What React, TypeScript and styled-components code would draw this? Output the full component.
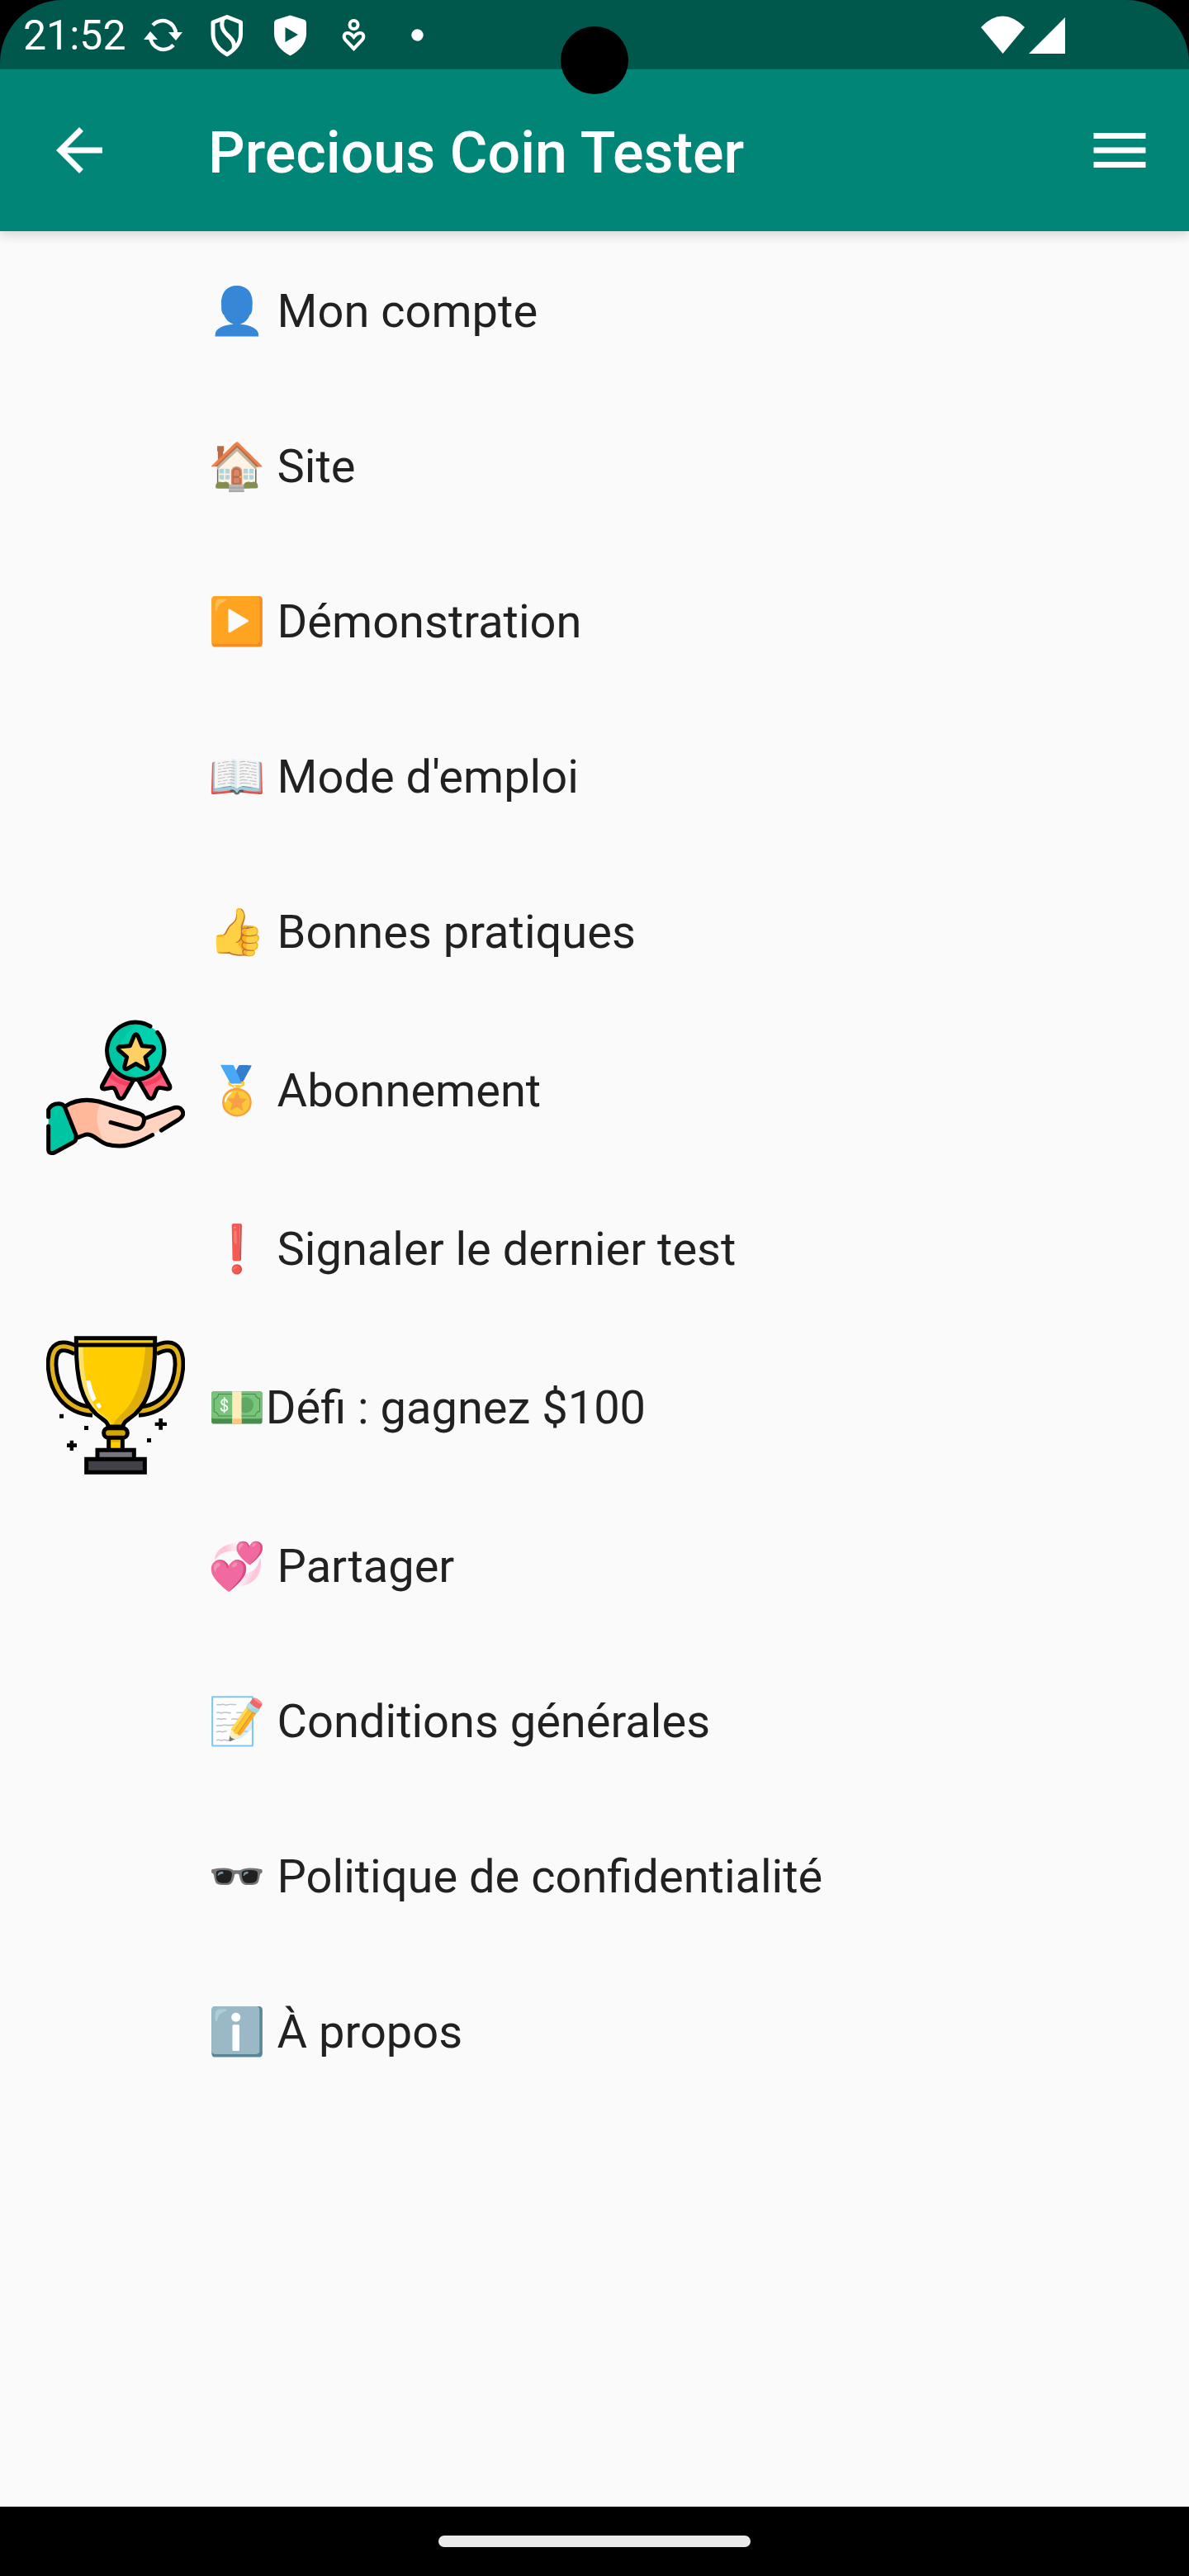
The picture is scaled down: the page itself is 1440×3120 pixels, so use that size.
import React from "react";
import styled, { createGlobalStyle } from "styled-components";

const GlobalStyle = createGlobalStyle`
  *, *::before, *::after { box-sizing: border-box; }
  body { margin: 0; background: #000; }
`;

const Screen = styled.div`
  display: flex;
  flex-direction: column;
  min-height: 100vh;
  background: #fafafa;
  color: rgba(0, 0, 0, 0.87);
  font-family: Roboto, "Noto Color Emoji", sans-serif;
`;

const StatusFrame = styled.div`
  position: relative;
  background: #000;
`;

const StatusBar = styled.div`
  display: flex;
  align-items: center;
  justify-content: space-between;
  height: 84px;
  padding: 0 146px 0 28px;
  border-radius: 76px 76px 0 0;
  background: #00574b;
  color: #fff;
`;

const StatusGroup = styled.div<{ $gap: number }>`
  display: flex;
  align-items: center;
  gap: ${(p) => p.$gap}px;
`;

const Clock = styled.time`
  font-size: 50px;
  line-height: 84px;
  padding-top: 2px;
`;

const StatusIcon = styled.svg`
  display: block;
  width: 53px;
  height: 53px;
`;

const Camera = styled.div`
  position: absolute;
  top: 32px;
  left: 50%;
  width: 82px;
  height: 82px;
  margin-left: -41px;
  border-radius: 50%;
  background: #000;
  z-index: 2;
`;

const AppBar = styled.header`
  display: flex;
  align-items: center;
  height: 196px;
  padding: 0 42px 0 54px;
  background: #008577;
  color: #fff;
  box-shadow: 0 4px 14px rgba(0, 0, 0, 0.16);
`;

const Title = styled.h1`
  flex: 1;
  margin: 0;
  padding: 6px 0 0 114px;
  font-size: 70px;
  line-height: 82px;
  font-weight: 500;
`;

const IconButton = styled.button`
  display: block;
  width: 84px;
  height: 84px;
  padding: 0;
  border: 0;
  background: none;
  color: inherit;
  cursor: pointer;

  svg { display: block; width: 84px; height: 84px; }
`;

const Menu = styled.ul`
  flex: 1;
  margin: 0;
  padding: 0;
  list-style: none;
`;

const MenuLink = styled.a<{ $tall?: boolean }>`
  display: flex;
  align-items: center;
  gap: 28px;
  height: ${(p) => (p.$tall ? 196 : 188)}px;
  padding: 0 56px;
  color: inherit;
  text-decoration: none;
`;

const Slot = styled.span`
  flex: none;
  width: 168px;

  svg { display: block; width: 168px; height: 168px; }
`;

const Label = styled.span`
  padding-top: 6px;
  font-size: 56px;
  line-height: 66px;
  white-space: pre-wrap;
`;

const NavBar = styled.footer`
  display: flex;
  align-items: center;
  justify-content: center;
  height: 84px;
  background: #000;
`;

const Handle = styled.div`
  width: 378px;
  height: 14px;
  border-radius: 7px;
  background: #eaeaea;
`;

const HandMedal = () => (
  <svg viewBox="48 42 504 504" aria-hidden="true" strokeLinejoin="round" strokeLinecap="round">
    <path d="M285 222 251 285q-4 12 8 12l27-5q10 0 14 10l10 24q8 12 19 1l36-62z" fill="#ff5d7d" />
    <path d="M464 222 497 285q4 12-8 12l-27-5q-10 0-14 10l-10 24q-8 12-19 1l-36-62z" fill="#ff5d7d" />
    <path d="M283 236q28 34 78 35l-9 16q-44-2-77-34zM466 236q-28 34-78 35l9 16q44-2 77-34z" fill="#f5405f" />
    <g fill="none" stroke="#000" strokeWidth="15">
      <path d="M285 222 251 285q-4 12 8 12l27-5q10 0 14 10l10 24q8 12 19 1l36-62" />
      <path d="M464 222 497 285q4 12-8 12l-27-5q-10 0-14 10l-10 24q-8 12-19 1l-36-62" />
    </g>
    <circle cx="375" cy="160" r="104" fill="#00d0ae" />
    <path d="M375 56a104 104 0 0 0 0 208q12 0 22-3a104 104 0 0 1 0-202q-10-3-22-3" fill="#00bf9c" opacity=".65" />
    <path d="M426 69A104 104 0 1 0 452 91" fill="none" stroke="#000" strokeWidth="15" />
    <path d="M367 104q7-11 14 0l15 36 37 3q11 4 3 13l-28 25 9 35q0 12-12 7l-31-18-31 18q-11 4-11-7l9-35-29-25q-7-9 3-13l37-3z" fill="#ffd164" stroke="#000" strokeWidth="15" />
    <path d="M120 358c35-22 72-26 118-16l150 45q18 7 16 19l108-42q25-5 32 15 4 16-15 28l-100 58c-60 35-106 48-162 32-44-14-56-44-88-36l-20 10z" fill="#ffd3bf" />
    <path d="M120 358c35-22 72-26 118-16l10 3c-24 42-20 90 10 142-26-15-48-31-69-26l-30 10z" fill="#ffb899" />
    <path d="M56 372q10-22 38-22 16 0 22 14l40 100q4 20-12 28l-66 38q-22 5-22-14z" fill="#00c5a2" />
    <g fill="none" stroke="#000" strokeWidth="15">
      <path d="M56 398V372q10-22 38-22 16 0 22 14l40 100q4 20-12 28l-66 36q-22 7-22-12V432" />
      <path d="M120 358c35-22 72-26 118-16l150 45c16 6 18 18 14 32-5 18-20 26-38 22l-82-23" />
      <path d="M404 405 506 367c20-8 34-2 39 15 2 12-7 20-16 26l-63 39M434 464c-60 33-104 50-166 34-34-12-54-46-84-33l-20 8" />
    </g>
  </svg>
);

const Trophy = () => (
  <svg viewBox="48 54 504 504" aria-hidden="true">
    <g fill="none">
      <path d="M157 106C100 78 68 92 69 160c4 92 56 162 148 168M443 106c57-28 89-14 88 54-4 92-56 162-148 168" stroke="#000" strokeWidth="44" />
      <path d="M157 106C100 78 68 92 69 160c4 92 56 162 148 168M443 106c57-28 89-14 88 54-4 92-56 162-148 168" stroke="#e2b117" strokeWidth="15" />
    </g>
    <path d="M157 62h286v26c0 124-20 200-72 250-32 26-44 30-44 46h-54c0-16-12-20-44-46-52-50-72-126-72-250z" fill="#ffcd00" />
    <path d="M164 94h18c2 120 22 200 60 240 28 22 40 32 44 50h-13c0-16-12-20-44-46-45-46-65-126-65-244" fill="#fbe06a" />
    <path d="M436 94h-28c-6 110-34 192-78 236-24 22-38 36-40 54h37c0-16 12-20 44-46 48-46 65-126 65-244" fill="#e0ae0c" />
    <path d="M193 216h15q6 34 22 66l-13 11q-18-30-24-77M227 303l14-6 8 14-10 8z" fill="#fff" />
    <path d="M157 88V62h286v26c0 124-20 200-72 250-32 26-44 30-44 46h-54c0-16-12-20-44-46-52-50-72-126-72-250zM157 87h286" fill="none" stroke="#000" strokeWidth="15" />
    <path d="M275 422h50v48h-50z" fill="#ffcd00" stroke="#000" strokeWidth="15" />
    <path d="M282 430h36v10h-36z" fill="#dfac0b" />
    <rect x="257" y="389" width="86" height="35" rx="17" fill="#d5a600" stroke="#000" strokeWidth="15" />
    <path d="M234 469h133v34H234z" fill="#77767e" stroke="#000" strokeWidth="15" />
    <path d="M194 502h212v48H194z" fill="#424147" stroke="#000" strokeWidth="15" />
    <path d="M96 338h15v15H96zM186 381h15v15h-15zM414 426h15v15h-15zM457 354h14v14h15v13h-15v14h-14v-14h-14v-13h14zM134 434h13v11h12v14h-12v12h-13v-12h-11v-14h11z" fill="#000" />
  </svg>
);

type Item = { text: string; icon?: React.ReactNode };

const items: Item[] = [
  { text: "👤 Mon compte" },
  { text: "🏠 Site" },
  { text: "▶️ Démonstration" },
  { text: "📖 Mode d'emploi" },
  { text: "👍 Bonnes pratiques" },
  { text: "🏅 Abonnement", icon: <HandMedal /> },
  { text: "❗ Signaler le dernier test" },
  { text: "💵Défi : gagnez $100", icon: <Trophy /> },
  { text: "💞 Partager" },
  { text: "📝 Conditions générales" },
  { text: "🕶️ Politique de confidentialité" },
  { text: "ℹ️ À propos" },
];

export default function App() {
  return (
    <Screen>
      <GlobalStyle />
      <StatusFrame>
        <StatusBar>
          <StatusGroup $gap={18}>
            <Clock>21:52</Clock>
            <StatusGroup $gap={24}>
              <StatusIcon viewBox="0 0 53 53" aria-hidden="true">
                <path d="M14 14.500A16 16 0 0 1 42 25M39 38.500A16 16 0 0 1 11 28" fill="none" stroke="#fff" strokeWidth="4.500" />
                <path d="M33 23h17l-8 10zM3 32h17l-9-10z" fill="#fff" />
              </StatusIcon>
              <StatusIcon viewBox="0 0 53 53" aria-hidden="true">
                <path d="M27 4.500 43.500 11v14c0 12-7 19-16.500 25C17.500 44 10 37 10 25V11z" fill="none" stroke="#fff" strokeWidth="5" strokeLinejoin="round" />
                <path d="M22 7c-3 9 0 14 5 19 7 6 10 11 8 18" fill="none" stroke="#fff" strokeWidth="5" />
              </StatusIcon>
              <StatusIcon viewBox="0 0 53 53" aria-hidden="true">
                <path fillRule="evenodd" d="M26.500 2.500 44 8q2 1 2 4v13c0 12-9 21-19.500 26.500C16 46 7 37 7 25V12q0-3 2-4zM20.500 17v18L36 26z" fill="#fff" />
              </StatusIcon>
              <StatusIcon viewBox="0 0 53 53" aria-hidden="true" fill="none" stroke="#fff" strokeWidth="4">
                <circle cx="26.500" cy="14" r="5" />
                <path d="M26.500 43 16.500 32.500C13 28 15 24 19 24c4 0 5 2 7.500 5 2.500-3 3.500-5 7.500-5s6 4 2.500 8.500z" />
              </StatusIcon>
              <StatusIcon viewBox="0 0 53 53" aria-hidden="true">
                <circle cx="26.500" cy="26.500" r="7.200" fill="#fff" />
              </StatusIcon>
            </StatusGroup>
          </StatusGroup>
          <StatusGroup $gap={0}>
            <StatusIcon viewBox="0 0 53 53" aria-hidden="true">
              <path d="M0 17q26-27 53 0L26.500 49z" fill="#fff" />
            </StatusIcon>
            <StatusIcon viewBox="0 0 53 53" aria-hidden="true">
              <path d="M49 5v44H5z" fill="#fff" />
            </StatusIcon>
          </StatusGroup>
        </StatusBar>
        <Camera />
      </StatusFrame>
      <AppBar>
        <IconButton type="button" aria-label="Retour">
          <svg viewBox="0 0 24 24" fill="currentColor" aria-hidden="true">
            <path d="M20 11H7.830l5.590-5.590L12 4l-8 8 8 8 1.410-1.410L7.830 13H20z" />
          </svg>
        </IconButton>
        <Title>Precious Coin Tester</Title>
        <IconButton type="button" aria-label="Menu">
          <svg viewBox="0 0 24 24" fill="currentColor" aria-hidden="true">
            <path d="M3 18h18v-2H3zm0-5h18v-2H3zm0-7v2h18V6z" />
          </svg>
        </IconButton>
      </AppBar>
      <Menu>
        {items.map((item) => (
          <li key={item.text}>
            <MenuLink href="#" $tall={Boolean(item.icon)}>
              <Slot>{item.icon}</Slot>
              <Label>{item.text}</Label>
            </MenuLink>
          </li>
        ))}
      </Menu>
      <NavBar>
        <Handle />
      </NavBar>
    </Screen>
  );
}
